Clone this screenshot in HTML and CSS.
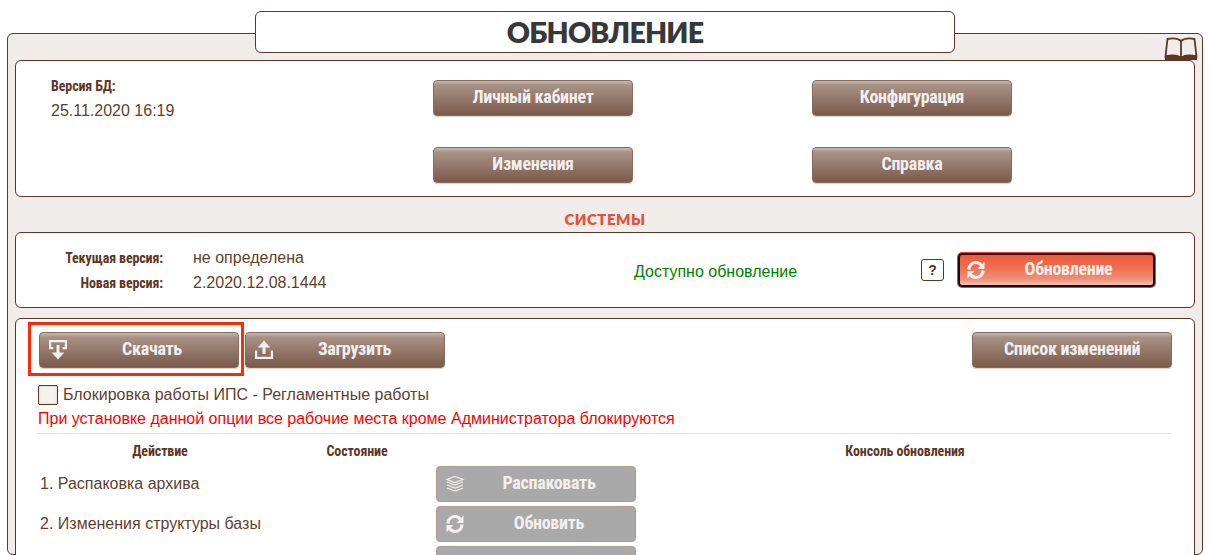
FILE: index.html
```html
<!DOCTYPE html>
<html lang="ru">
<head>
<meta charset="utf-8">
<title>Обновление</title>
<link rel="stylesheet" href="styles.css">
</head>
<body>
<svg class="defs" width="0" height="0" aria-hidden="true">
  <symbol id="sync" viewBox="0 0 20 20">
    <path fill="none" stroke="currentColor" stroke-width="3.200" d="M2.800 9.500C3.200 5.500 6.200 2.500 10 2.500C12.300 2.500 14 3.500 15.300 5.200"/>
    <path fill="currentColor" d="M18.500 1.500V9H11.500Z"/>
    <path fill="none" stroke="currentColor" stroke-width="3.200" d="M17.200 10.500C16.800 14.500 13.800 17.500 10 17.500C7.700 17.500 6 16.500 4.700 14.800"/>
    <path fill="currentColor" d="M1.500 18.500V11H8.500Z"/>
  </symbol>
</svg>
<main class="panel">
  <h1 class="title">ОБНОВЛЕНИЕ</h1>
  <svg class="book" viewBox="0 0 34 24" aria-hidden="true">
    <path fill="none" stroke="#5f3524" stroke-width="1.800" d="M17 4C14 1.500 8 1 3.500 2L1.500 19.500C7 17.800 13 18.200 17 20.500C21 18.200 27 17.800 32.500 19.500L30.500 2C26 1 20 1.500 17 4ZM17 4V20.500"/>
    <path fill="#5f3524" d="M1 19C7 17.500 13 18 17 20C21 18 27 17.500 33 19V23H1Z"/>
  </svg>

  <section class="box box-top">
    <div class="db">
      <div class="label">Версия БД:</div>
      <div class="db-date">25.11.2020 16:19</div>
    </div>
    <button class="btn btn-a">Личный кабинет</button>
    <button class="btn btn-b">Конфигурация</button>
    <button class="btn btn-a">Изменения</button>
    <button class="btn btn-b">Справка</button>
  </section>

  <h2 class="section-title">СИСТЕМЫ</h2>

  <section class="box box-sys">
    <dl class="versions">
      <dt class="label">Текущая версия:</dt><dd>не определена</dd>
      <dt class="label">Новая версия:</dt><dd>2.2020.12.08.1444</dd>
    </dl>
    <div class="avail">Доступно обновление</div>
    <div class="help">?</div>
    <button class="btn btn-hot">
      <svg class="ico ico-hot"><use href="#sync"/></svg>
      <span>Обновление</span>
    </button>
  </section>

  <section class="box box-main">
    <div class="toolbar">
      <button class="btn btn-icon">
        <svg class="ico" viewBox="0 0 20 20" aria-hidden="true">
          <path fill="none" stroke="currentColor" stroke-width="2.200" d="M5.500 8.200H2.100V1.100H17.900V8.200H14.500"/>
          <path fill="none" stroke="currentColor" stroke-width="3" d="M10 5V14"/>
          <path fill="currentColor" d="M3.800 12.500H16.200L10 19.500Z"/>
        </svg>
        <span>Скачать</span>
      </button>
      <button class="btn btn-icon btn-upload">
        <svg class="ico" viewBox="0 0 20 20" aria-hidden="true">
          <path fill="none" stroke="currentColor" stroke-width="2.200" d="M2.100 10.500V17.900H17.900V10.500"/>
          <path fill="none" stroke="currentColor" stroke-width="3" d="M10 5V14"/>
          <path fill="currentColor" d="M3.800 7.500L10 .5L16.200 7.500Z"/>
        </svg>
        <span>Загрузить</span>
      </button>
      <button class="btn btn-list">Список изменений</button>
      <div class="mark"></div>
    </div>
    <label class="lock"><span class="check"></span>Блокировка работы ИПС - Регламентные работы</label>
    <p class="warn">При установке данной опции все рабочие места кроме Администратора блокируются</p>
    <div class="heads">
      <div class="label">Действие</div>
      <div class="label">Состояние</div>
      <div></div>
      <div class="label">Консоль обновления</div>
    </div>
    <div class="table">
      <div class="step">1. Распаковка архива</div>
      <button class="btn btn-icon btn-off">
        <svg class="ico" viewBox="0 0 20 20" aria-hidden="true">
          <g fill="none" stroke="currentColor" stroke-width="1.200">
            <path d="M10 2.500L18 5.500L10 8.500L2 5.500Z"/>
            <path d="M2 8L10 11L18 8"/>
            <path d="M2 11L10 14L18 11"/>
            <path d="M2 14L10 17L18 14"/>
          </g>
        </svg>
        <span>Распаковать</span>
      </button>
      <div class="step">2. Изменения структуры базы</div>
      <button class="btn btn-icon btn-off">
        <svg class="ico"><use href="#sync"/></svg>
        <span>Обновить</span>
      </button>
      <div class="step"></div>
      <button class="btn btn-icon btn-off"></button>
    </div>
  </section>
</main>
</body>
</html>
```
FILE: styles.css
```css
html, body {
  margin: 0;
  height: 555px;
  overflow: hidden;
  background: #fff;
}
body {
  padding: 33px 7px 0 7px;
  box-sizing: border-box;
  font-family: "Liberation Sans", Arial, sans-serif;
  font-size: 16px;
  color: #5f3f2e;
}
.defs { position: absolute; }
.panel {
  position: relative;
  background: #f0ecE9;
  border: 1px solid #5f3524;
  border-radius: 6px;
  padding: 0 7px;
  height: 522px;
  box-sizing: border-box;
  overflow: hidden;
  overflow: visible;
}
.title {
  box-sizing: border-box;
  width: 700px;
  height: 42px;
  margin: -23px auto 0;
  background: #fff;
  border: 1px solid #5f3524;
  border-radius: 6px;
  text-align: center;
  font: 800 28.5px/40px Lato, sans-serif;
  letter-spacing: -.8px;
  color: #37383a;
}
.book {
  position: absolute;
  right: 4px;
  top: 3px;
  width: 34px;
  height: 24px;
}
.box {
  background: #fff;
  border: 1px solid #5f3524;
  border-radius: 6px;
}
.box-top {
  margin-top: 7px;
  height: 137px;
  box-sizing: border-box;
  display: grid;
  grid-template-columns: 417px 200px 179px 200px;
  grid-template-rows: 36px 36px;
  row-gap: 31px;
  padding-top: 19px;
}
.db {
  grid-row: 1 / 3;
  padding-left: 35px;
}
.label {
  font-family: "Liberation Sans Narrow", "Roboto Condensed", Roboto, sans-serif;
  font-weight: 700;
  font-size: 14px;
  letter-spacing: -.12px;
  color: #5f3524;
}
.db .label { line-height: 14px; margin-top: -1px; }
.db-date { margin-top: 8px; line-height: 20px; }
.btn-a { grid-column: 2; }
.btn-b { grid-column: 4; }
.btn {
  box-sizing: border-box;
  width: 200px;
  height: 36px;
  margin: 0;
  padding: 0 0 3px;
  border: 1px solid #8a6a5b;
  border-radius: 4px;
  background: linear-gradient(#c8bab1 0, #a89286 12%, #8f7366 60%, #7b5a4b 100%);
  color: #f3efee;
  font-family: "Liberation Sans Narrow", "Roboto Condensed", Roboto, sans-serif;
  font-weight: 700;
  font-size: 18px;
  letter-spacing: -.3px;
  line-height: 30px;
  text-align: center;
  box-shadow: 0 1px 1px #d8d0ca;
}
.section-title {
  margin: 0;
  height: 35px;
  text-align: center;
  font: 800 15px/45px Lato, sans-serif;
  letter-spacing: .5px;
  color: #e7503a;
}
.box-sys {
  height: 76px;
  box-sizing: border-box;
  display: flex;
  align-items: center;
}
.versions {
  margin: 0;
  display: grid;
  grid-template-columns: 147px auto;
  column-gap: 30px;
  row-gap: 5px;
  line-height: 20px;
  width: 618px;
}
.versions dt { text-align: right; line-height: 20px; }
.versions dd { margin: 0; }
.avail {
  width: 287px;
  color: #008000;
  margin-top: 4px;
}
.help {
  box-sizing: border-box;
  width: 23px;
  height: 22px;
  border: 1px solid #5f3524;
  border-radius: 3px;
  text-align: center;
  font-weight: 700;
  font-size: 14px;
  line-height: 20px;
  color: #5f3524;
  margin-right: 14px;
}
.btn-hot, .btn-icon {
  display: flex;
  align-items: center;
}
.btn-icon { padding: 0; }
.btn-hot {
  width: 197px;
  height: 34px;
  padding: 0;
  border: 2px solid #111;
  box-shadow: 0 0 0 1px #f33;
  border-radius: 4px;
  background: linear-gradient(#ee5a3a 0, #ef6b4b 35%, #f08e76 80%, #f6c0ae 100%);
}
.btn span {
  flex: 1;
  padding: 0 2px 3px 0;
  text-align: center;
}
.btn-upload span { padding-right: 9px; }
.ico {
  flex: none;
  width: 20px;
  height: 20px;
  margin-left: 8px;
}
.btn-hot .ico-hot { margin-left: 6px; }
.box-main {
  margin-top: 10px;
  padding: 13px 22px 0 23px;
  height: 300px;
}
.toolbar {
  display: flex;
  gap: 6px;
  position: relative;
}
.btn-list { margin-left: auto; }
.mark {
  position: absolute;
  left: -11px;
  top: -10px;
  width: 216px;
  height: 54px;
  box-sizing: border-box;
  border: 3px solid #fb2b08;
  pointer-events: none;
}
.lock {
  display: flex;
  align-items: center;
  gap: 5px;
  margin: 17px 2px 0 -1px;
  line-height: 20px;
}
.check {
  box-sizing: border-box;
  width: 20px;
  height: 20px;
  background: #f4f1ef;
  border: 1px solid #5f3524;
  border-radius: 2px;
  box-shadow: inset 0 0 2px #c9bdb6;
}
.warn {
  margin: 4px 2px 0 -1px;
  line-height: 20px;
  color: #f00;
  padding-bottom: 4px;
  border-bottom: 1px solid #e6e2df;
}
.heads {
  display: grid;
  grid-template-columns: 244px 150px 208px 530px;
  margin-left: -1px;
  height: 32px;
  line-height: 34px;
  text-align: center;
}
.table {
  display: grid;
  grid-template-columns: 397px 200px;
  grid-auto-rows: 36px;
  row-gap: 4px;
}
.step { line-height: 36px; padding-left: 1px; }
.btn-off {
  background: #a9a9a9;
  border-color: #b09a8f;
  box-shadow: none;
}
```
